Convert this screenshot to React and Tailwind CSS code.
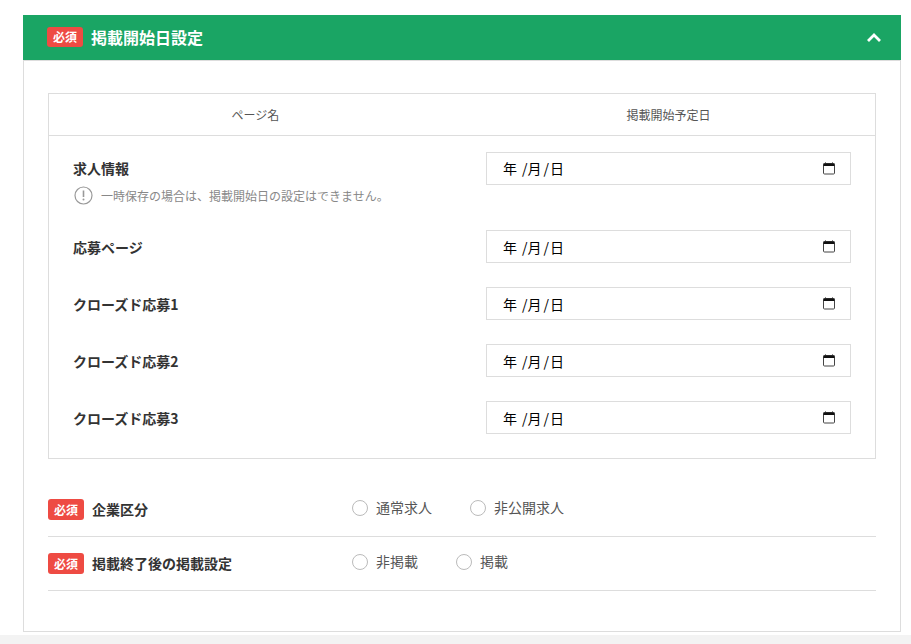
const FONT = "font-['Noto_Sans_CJK_JP','Noto_Sans',sans-serif]";

function Badge({ className = "" }) {
  return (
    <span className={`flex h-[21px] w-9 shrink-0 items-center justify-center rounded-[3px] bg-[#ee4b43] text-[12px] leading-none font-bold text-white ${className}`}>
      必須
    </span>
  );
}

function CalendarIcon() {
  return (
    <svg width="12" height="13" viewBox="0 0 12 13" className="block">
      <path d="M2.5 0.5v1.5M9.5 0.5v1.5" stroke="#111" strokeWidth="1" />
      <rect x="0.5" y="1.5" width="11" height="10.5" rx="1" fill="none" stroke="#444" strokeWidth="1" />
      <rect x="0.5" y="1.5" width="11" height="2.5" fill="#111" />
    </svg>
  );
}

function DateField({ nudge }) {
  return (
    <div className={`flex h-[33px] w-full items-center border border-[#dddddd] bg-white pr-[15px] pl-[16px] text-[14px] text-black ${nudge ? "pt-px" : ""}`}>
      <span>年</span>
      <span className="ml-[5px]">/</span>
      <span>月</span>
      <span className="ml-[2px]">/</span>
      <span className="ml-[1px]">日</span>
      <span className={`ml-auto ${nudge ? "-mt-px" : ""}`}>
        <CalendarIcon />
      </span>
    </div>
  );
}

function Row({ label, note, nudge = true }) {
  return (
    <div className="grid grid-cols-2">
      <div className="pl-6">
        <div className={`flex h-[33px] items-center text-[14px] font-bold text-[#333333] ${nudge ? "pt-px" : ""}`}>{label}</div>
        {note && (
          <div className="flex h-[21px] items-center gap-[8px] text-[12px] text-[#888888]">
            <svg width="19" height="19" viewBox="0 0 19 19" className="ml-[1px] shrink-0">
              <circle cx="9.5" cy="9.5" r="8.5" fill="none" stroke="#999999" strokeWidth="1.2" />
              <path d="M9.5 4.5v6.5" stroke="#999999" strokeWidth="1.6" />
              <circle cx="9.5" cy="13.6" r="1" fill="#999999" />
            </svg>
            <span>{note}</span>
          </div>
        )}
      </div>
      <div className="px-6">
        <DateField nudge={nudge} />
      </div>
    </div>
  );
}

function Radio({ label, className = "" }) {
  return (
    <label className={`flex items-center gap-2 text-[14px] text-[#555555] ${className}`}>
      <span className="h-4 w-4 rounded-full border border-[#bbbbbb] bg-white" />
      <span>{label}</span>
    </label>
  );
}

function FormRow({ label, children }) {
  return (
    <div className="flex h-[54px] border-b border-[#dddddd] pt-4">
      <div className="flex h-[21px] w-[304px] items-center">
        <Badge />
        <span className="ml-2 text-[14px] font-bold text-[#333333]">{label}</span>
      </div>
      <div className="-mt-[2px] flex h-[21px] items-center">{children}</div>
    </div>
  );
}

export default function App() {
  return (
    <div className={`min-h-[644px] bg-white ${FONT}`}>
      <div className="ml-[23px] w-[878px] pt-[15px] pb-[3px]">
        <div className="-mb-px flex h-[46px] items-center border-b border-[#d5d5d5] bg-[#1aa564] pr-[20px] pl-6">
          <Badge className="-mt-[1px] !h-[20px]" />
          <h2 className="-mt-[2px] ml-2 text-[16px] font-bold text-white">掲載開始日設定</h2>
          <svg width="14" height="9" viewBox="0 0 14 9" className="-mt-[1px] ml-auto" fill="none">
            <path d="M1 8L7 2l6 6" stroke="#ffffff" strokeWidth="2.8" />
          </svg>
        </div>
        <div className="border border-[#dddddd] px-6 pt-[32px] pb-10">
          <div className="border border-[#dddddd] pb-6">
            <div className="grid h-[42px] grid-cols-2 border-b border-[#dddddd] text-center text-[12px] text-[#555555]">
              <div className="flex items-center justify-center">ページ名</div>
              <div className="flex items-center justify-center">掲載開始予定日</div>
            </div>
            <div className="flex flex-col gap-6 pt-4">
              <Row label="求人情報" note="一時保存の場合は、掲載開始日の設定はできません。" nudge={false} />
              <Row label="応募ページ" />
              <Row label="クローズド応募1" />
              <Row label="クローズド応募2" />
              <Row label="クローズド応募3" />
            </div>
          </div>
          <div className="mt-6">
            <FormRow label="企業区分">
              <Radio label="通常求人" />
              <Radio label="非公開求人" className="ml-[38px]" />
            </FormRow>
            <FormRow label="掲載終了後の掲載設定">
              <Radio label="非掲載" />
              <Radio label="掲載" className="ml-[38px]" />
            </FormRow>
          </div>
        </div>
      </div>
      <div className="h-[9px] bg-[#f3f3f3]" />
    </div>
  );
}
